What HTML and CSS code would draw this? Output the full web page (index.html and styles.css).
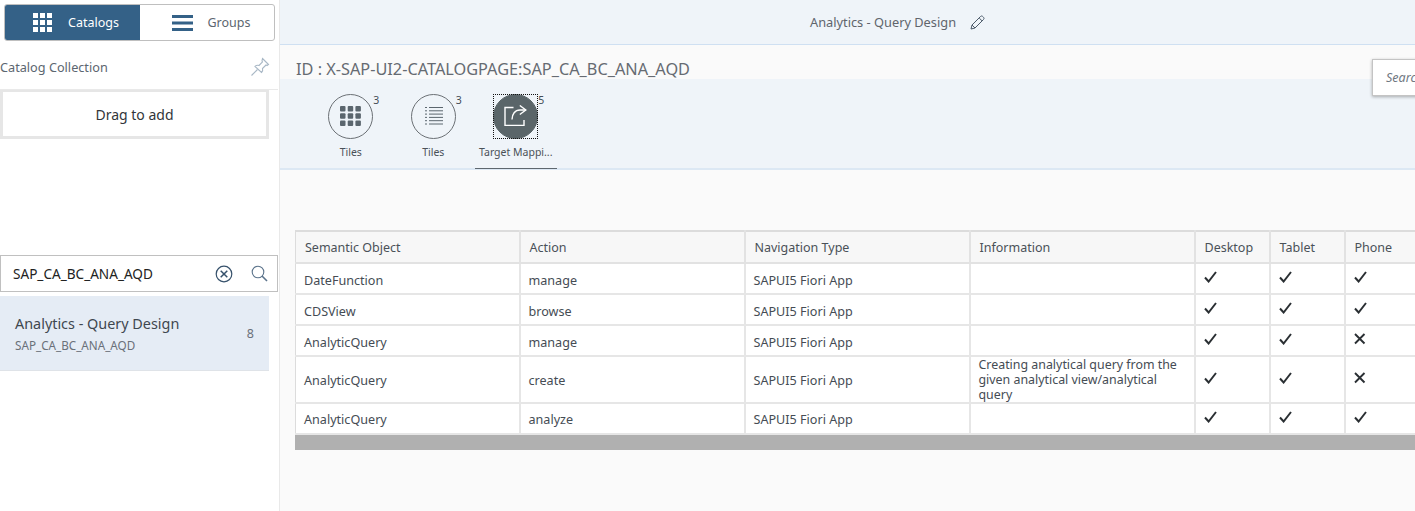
FILE: index.html
```html
<!DOCTYPE html>
<html lang="en">
<head>
<meta charset="utf-8">
<title>Analytics - Query Design</title>
<link rel="stylesheet" href="styles.css">
</head>
<body>
<svg class="defs" width="0" height="0" aria-hidden="true">
  <symbol id="ck" viewBox="0 0 13 12"><path d="M1 6.500L4.600 10.500L12 1" fill="none" stroke="#2a2f33" stroke-width="2"/></symbol>
  <symbol id="xx" viewBox="0 0 13 12"><path d="M1 1L10.500 10.500M10.500 1L1 10.500" fill="none" stroke="#2a2f33" stroke-width="1.900"/></symbol>
</svg>
<aside class="side">
  <div class="toggle">
    <div class="seg seg-on">
      <svg class="seg-ico" width="20" height="20" viewBox="0 0 20 20"><g fill="#fff"><rect x="0" y="0" width="5" height="5"/><rect x="7" y="0" width="5" height="5"/><rect x="14" y="0" width="5" height="5"/><rect x="0" y="7" width="5" height="5"/><rect x="7" y="7" width="5" height="5"/><rect x="14" y="7" width="5" height="5"/><rect x="0" y="14" width="5" height="5"/><rect x="7" y="14" width="5" height="5"/><rect x="14" y="14" width="5" height="5"/></g></svg>
      <span>Catalogs</span>
    </div>
    <div class="seg seg-off">
      <svg class="seg-ico" width="22" height="18" viewBox="0 0 22 18"><g fill="#346187"><rect y="1" width="21" height="3"/><rect y="7.500" width="21" height="3"/><rect y="14" width="21" height="3"/></g></svg>
      <span>Groups</span>
    </div>
  </div>
  <div class="coll">
    <span>Catalog Collection</span>
    <svg width="20" height="20" viewBox="0 0 20 20" fill="none" stroke="#a9b8c6" stroke-width="1.100"><path d="M12.500 1.500l6 6-1.500 1-1-.5-3.500 3.500c.5 1.500 0 3-1 4L5 9.500c1-1 2.500-1.500 4-1l3.500-3.500-.5-1z"/><path d="M7.500 12.500L1.500 18.500"/></svg>
  </div>
  <div class="drop">Drag to add</div>
  <div class="search">
    <span class="search-val">SAP_CA_BC_ANA_AQD</span>
    <svg width="18" height="18" viewBox="0 0 18 18" fill="none" stroke="#36516b" stroke-width="1.200"><circle cx="9" cy="9" r="7.800"/><path d="M5.700 5.700l6.600 6.600M12.300 5.700l-6.600 6.600" stroke-width="1.500"/></svg>
    <svg class="mag" width="17" height="17" viewBox="0 0 17 17" fill="none" stroke="#5b738b" stroke-width="1.100"><circle cx="7" cy="7" r="5.800"/><path d="M11 11l5 5" stroke-width="1.600"/></svg>
  </div>
  <div class="item">
    <div>
      <div class="item-t">Analytics - Query Design</div>
      <div class="item-s">SAP_CA_BC_ANA_AQD</div>
    </div>
    <span class="item-n">8</span>
  </div>
</aside>
<main class="main">
  <header class="top">
    <span>Analytics - Query Design</span>
    <svg width="15" height="15" viewBox="0 0 15 15" fill="none" stroke="#4c5a6a" stroke-width="1"><path d="M1 14l1-4L10.500 1.500c.7-.7 1.500-.7 2.200 0l.8.8c.7.700.7 1.500 0 2.200L5 13z"/><path d="M9.200 3l2.800 2.800M2 10l3 3"/></svg>
  </header>
  <div class="idbar">ID : X-SAP-UI2-CATALOGPAGE:SAP_CA_BC_ANA_AQD</div>
  <nav class="tabs">
    <div class="tab">
      <div class="circ">
        <svg class="tab-ico" width="21" height="20" viewBox="0 0 21 20" fill="#5b666e"><rect width="5.500" height="5.500" rx="1"/><rect x="7.700" width="5.500" height="5.500" rx="1"/><rect x="15.400" width="5.500" height="5.500" rx="1"/><rect y="7.200" width="5.500" height="5.500" rx="1"/><rect x="7.700" y="7.200" width="5.500" height="5.500" rx="1"/><rect x="15.400" y="7.200" width="5.500" height="5.500" rx="1"/><rect y="14.400" width="5.500" height="5.500" rx="1"/><rect x="7.700" y="14.400" width="5.500" height="5.500" rx="1"/><rect x="15.400" y="14.400" width="5.500" height="5.500" rx="1"/></svg>
        <span class="cnt">3</span>
      </div>
      <span class="lbl">Tiles</span>
    </div>
    <div class="tab">
      <div class="circ">
        <svg class="tab-ico" width="19" height="18" viewBox="0 0 19 18" stroke="#5b666e" stroke-width="1"><path d="M5 .5h14M5 3.800h14M5 7.100h14M5 10.400h14M5 13.700h14M5 17h14M1 .5h2M1 3.800h2M1 7.100h2M1 10.400h2M1 13.700h2M1 17h2"/></svg>
        <span class="cnt">3</span>
      </div>
      <span class="lbl">Tiles</span>
    </div>
    <div class="tab tab-on">
      <div class="circ circ-on">
        <svg class="tab-ico" width="23" height="21" viewBox="0 0 23 21" fill="none" stroke="#fff" stroke-width="1.400"><path d="M9.500 2.500H1v18h19v-5.500"/><path d="M8 14.500c0-5.500 3-9.500 8-9.500h5.800"/><path d="M15.800 .5L21.800 5L15.800 9.500"/></svg>
        <span class="cnt">5</span>
      </div>
      <span class="lbl">Target Mappi...</span>
    </div>
  </nav>
  <section class="body">
    <div class="floatsearch">Search</div>
    <div class="tbl-wrap">
      <table class="tbl">
        <thead>
          <tr><th>Semantic Object</th><th>Action</th><th>Navigation Type</th><th>Information</th><th>Desktop</th><th>Tablet</th><th>Phone</th></tr>
        </thead>
        <tbody>
          <tr class="r31"><td>DateFunction</td><td>manage</td><td>SAPUI5 Fiori App</td><td></td><td class="m"><svg class="mk"><use href="#ck"/></svg></td><td class="m"><svg class="mk"><use href="#ck"/></svg></td><td class="m"><svg class="mk"><use href="#ck"/></svg></td></tr>
          <tr class="r31"><td>CDSView</td><td>browse</td><td>SAPUI5 Fiori App</td><td></td><td class="m"><svg class="mk"><use href="#ck"/></svg></td><td class="m"><svg class="mk"><use href="#ck"/></svg></td><td class="m"><svg class="mk"><use href="#ck"/></svg></td></tr>
          <tr class="r31"><td>AnalyticQuery</td><td>manage</td><td>SAPUI5 Fiori App</td><td></td><td class="m"><svg class="mk"><use href="#ck"/></svg></td><td class="m"><svg class="mk"><use href="#ck"/></svg></td><td class="m"><svg class="mk"><use href="#xx"/></svg></td></tr>
          <tr class="r46"><td>AnalyticQuery</td><td>create</td><td>SAPUI5 Fiori App</td><td class="info">Creating analytical query from the given analytical view/analytical query</td><td class="m"><svg class="mk"><use href="#ck"/></svg></td><td class="m"><svg class="mk"><use href="#ck"/></svg></td><td class="m"><svg class="mk"><use href="#xx"/></svg></td></tr>
          <tr class="r31 rlast"><td>AnalyticQuery</td><td>analyze</td><td>SAPUI5 Fiori App</td><td></td><td class="m"><svg class="mk"><use href="#ck"/></svg></td><td class="m"><svg class="mk"><use href="#ck"/></svg></td><td class="m"><svg class="mk"><use href="#ck"/></svg></td></tr>
        </tbody>
      </table>
      <div class="scroll"></div>
    </div>
  </section>
</main>
</body>
</html>
```
FILE: styles.css
```css
* { box-sizing: border-box; }
html, body { margin: 0; height: 100%; }
body {
  display: flex;
  width: 1415px;
  height: 511px;
  overflow: hidden;
  background: #fafafa;
  font-family: "Noto Sans", "Open Sans", sans-serif;
  font-size: 13px;
  color: #32363a;
}
.defs { position: absolute; }
.side {
  width: 280px;
  flex: none;
  height: 100%;
  background: #fff;
  border-right: 1px solid #e9e9e9;
}
.toggle {
  display: flex;
  width: 271px;
  height: 37px;
  margin: 4px 0 0 4px;
  border: 1px solid #bfbfbf;
  border-radius: 3px;
  overflow: hidden;
}
.seg {
  display: flex;
  align-items: center;
  justify-content: center;
  font-size: 12.500px;
}
.seg-on { background: #346187; color: #fff; flex: 0 0 135px; gap: 15px; padding-left: 7px; }
.seg-off { flex: 1 1 0; color: #5c6670; gap: 14px; padding-left: 8px; }
.coll {
  display: flex;
  align-items: center;
  justify-content: space-between;
  height: 49px;
  padding: 4px 8px 0 0;
  margin-right: 1px;
  border-bottom: 1px solid #e9e9e9;
  color: #5c6670;
  font-size: 12.700px;
}
.drop {
  display: flex;
  align-items: center;
  justify-content: center;
  width: 269px;
  height: 49px;
  border: 3px solid #e6e6e6;
  border-top-width: 2px;
  font-size: 14px;
}
.search {
  display: flex;
  align-items: center;
  gap: 18px;
  width: 278px;
  height: 37px;
  margin-top: 116px;
  padding: 0 9px 0 12px;
  border: 1px solid #c0c0c0;
  font-size: 13.600px;
  color: #222;
}
.search-val { flex: 1; }
.item {
  display: flex;
  align-items: center;
  justify-content: space-between;
  width: 269px;
  height: 75px;
  margin-top: 4px;
  padding: 0 15px;
  background: #e5ecf5;
  border-bottom: 1px solid #dfe3e8;
}
.item-t { font-size: 14.400px; color: #3f474f; }
.item-s { font-size: 11.700px; color: #6a7079; margin-top: 4px; }
.item-n { font-size: 12.500px; color: #6a7079; }
.main { flex: 1; min-width: 0; display: flex; flex-direction: column; }
.top {
  display: flex;
  align-items: center;
  justify-content: center;
  gap: 14px;
  height: 45px;
  flex: none;
  padding-left: 100px;
  background: #eff4f9;
  border-bottom: 1px solid #cfe0f2;
  color: #60656c;
  font-size: 12.800px;
}
.idbar {
  height: 34px;
  flex: none;
  padding: 14px 0 0 16px;
  font-size: 16.300px;
  line-height: 20px;
  color: #666b72;
  overflow: hidden;
  white-space: nowrap;
}
.tabs {
  display: flex;
  height: 91px;
  flex: none;
  padding: 15px 0 0 29.500px;
  background: #eff4f9;
  border-bottom: 2px solid #dce8f4;
}
.tab {
  display: flex;
  flex-direction: column;
  align-items: center;
  width: 82.500px;
  height: 75px;
}
.tab-on { border-bottom: 1px solid #5d676f; }
.tab-ico { margin-top: -2px; }
.circ {
  position: relative;
  display: flex;
  align-items: center;
  justify-content: center;
  width: 45px;
  height: 45px;
  border: 1px solid #6b7075;
  border-radius: 50%;
}
.circ-on {
  background: #5a6569;
  border-color: #5a6569;
}
.circ-on::after {
  content: "";
  position: absolute;
  inset: -1px;
  border: 1px dotted #111;
}
.cnt {
  position: absolute;
  left: 44px;
  top: -1px;
  font-size: 10.500px;
  line-height: 12px;
  color: #444c55;
}
.lbl {
  margin-top: 6px;
  font-size: 10.500px;
  line-height: 14px;
  color: #4a5158;
  white-space: nowrap;
}
.body { flex: 1; position: relative; padding: 60px 0 0 15px; background: #fafafa; min-height: 0; }
.floatsearch {
  position: absolute;
  left: 1092px;
  top: -111px;
  width: 60px;
  height: 37px;
  padding: 9px 0 0 13px;
  background: #fff;
  border: 1px solid #c4c4c4;
  box-shadow: 0 1px 3px rgba(0,0,0,.3);
  font-style: italic;
  font-size: 12.500px;
  color: #6f7881;
  overflow: hidden;
}
.tbl-wrap { width: 1125px; overflow: hidden; }
.tbl {
  border-collapse: collapse;
  table-layout: fixed;
  width: 1125px;
  background: #fff;
  border-top: 2px solid #dcdcdc;
  border-left: 1px solid #dcdcdc;
  border-bottom: 2px solid #e2e2e2;
}
.tbl th:nth-child(1) { width: 224px; }
.tbl th:nth-child(2), .tbl th:nth-child(3), .tbl th:nth-child(4) { width: 225px; }
.tbl th:nth-child(5), .tbl th:nth-child(6) { width: 75px; }
.tbl th:nth-child(7) { width: 76px; }
.tbl th {
  height: 32px;
  padding: 0 9px;
  background: #f7f7f7;
  text-align: left;
  font-weight: 400;
  font-size: 12.500px;
  color: #4a5158;
  border: 2px solid #e2e2e2;
  border-width: 0 2px 2px 0;
}
.tbl td {
  padding: 3px 8px 0;
  font-size: 12.600px;
  color: #454c54;
  border: 2px solid #e6e6e6;
  border-width: 0 2px 2px 0;
}
.r31 td { height: 31px; }
.r46 td { height: 46px; padding-top: 1px; }
.rlast td { padding-top: 1px; }
.tbl td.info { font-size: 12.400px; line-height: 15px; padding: 0 8px; }
.tbl td.m { padding: 0 0 3px 8px; }
.mk { display: block; width: 13px; height: 12px; }
.scroll { height: 15px; background: #b0b0b0; }
```
